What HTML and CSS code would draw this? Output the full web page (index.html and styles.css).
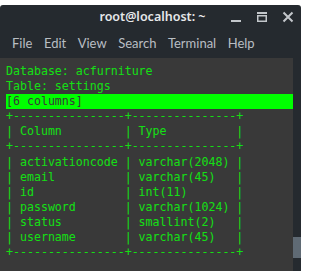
FILE: index.html
```html
<!DOCTYPE html>
<html lang="en">
<head>
    <meta charset="UTF-8">
    <title>root@localhost: ~</title>
    <link rel="stylesheet" href="styles.css">
</head>
<body>
    <div class="window">
        <div class="titlebar">
            <span class="title">root@localhost: ~</span>
            <div class="controls">
                <svg class="ctl" width="12" height="12" viewBox="0 0 12 12"><rect x="1" y="9" width="10" height="2" fill="#c3c7cb"/></svg>
                <svg class="ctl" width="12" height="12" viewBox="0 0 12 12"><rect x="1" y="1" width="10" height="2" fill="#c3c7cb"/><rect x="1.75" y="4.75" width="8.5" height="5.5" fill="none" stroke="#c3c7cb" stroke-width="1.5"/></svg>
                <svg class="ctl" width="12" height="12" viewBox="0 0 12 12"><path d="M1.5 1.5 L10.5 10.5 M10.5 1.5 L1.5 10.5" stroke="#c3c7cb" stroke-width="2"/></svg>
            </div>
        </div>
        <div class="menubar">
            <span>File</span>
            <span>Edit</span>
            <span>View</span>
            <span>Search</span>
            <span>Terminal</span>
            <span>Help</span>
        </div>
        <div class="term">
            <div class="screen">
                <div class="line">Database: acfurniture</div>
                <div class="line">Table: settings</div>
                <div class="line hl">[6 columns]</div>
                <div class="line">+----------------+---------------+</div>
                <div class="line">| Column         | Type          |</div>
                <div class="line">+----------------+---------------+</div>
                <div class="line">| activationcode | varchar(2048) |</div>
                <div class="line">| email          | varchar(45)   |</div>
                <div class="line">| id             | int(11)       |</div>
                <div class="line">| password       | varchar(1024) |</div>
                <div class="line">| status         | smallint(2)   |</div>
                <div class="line">| username       | varchar(45)   |</div>
                <div class="line">+----------------+---------------+</div>
            </div>
            <div class="scrollbar">
                <div class="thumb"></div>
            </div>
        </div>
    </div>
</body>
</html>
```

FILE: styles.css
```css
body {
    margin: 0;
    background: #ffffff;
}

.window {
    margin-top: 5px;
    width: 301px;
    height: 266px;
    background: #252a2f;
    display: flex;
    flex-direction: column;
    border-radius: 3px 3px 0 0;
    overflow: hidden;
}

.titlebar {
    flex-shrink: 0;
    height: 22px;
    display: flex;
    align-items: center;
    justify-content: center;
    position: relative;
}

.title {
    font-family: "Noto Sans", sans-serif;
    font-size: 12.5px;
    font-weight: 600;
    color: #e6e8ea;
    margin-left: 4px;
}

.controls {
    position: absolute;
    right: 7px;
    top: 6px;
    display: flex;
    gap: 14px;
}

.menubar {
    flex-shrink: 0;
    height: 31px;
    display: flex;
    align-items: center;
    gap: 11.5px;
    padding-left: 12px;
    font-family: "Lato", sans-serif;
    font-size: 13px;
    color: #b9bec3;
}

.term {
    flex: 1;
    min-height: 0;
    display: flex;
    background: #393939;
}

.screen {
    flex: 1;
    padding: 6px 0 0 6px;
    font-family: "DejaVu Sans Mono", monospace;
    font-size: 11.6px;
    line-height: 15.1px;
    color: #14e014;
}

.line {
    white-space: pre;
}

.line.hl {
    background: #00ff00;
    color: #393939;
}

.scrollbar {
    width: 8px;
    background: #252a2f;
    display: flex;
    flex-direction: column;
    justify-content: flex-end;
    padding-bottom: 13px;
}

.thumb {
    height: 21px;
    background: #5f6a74;
}
```
